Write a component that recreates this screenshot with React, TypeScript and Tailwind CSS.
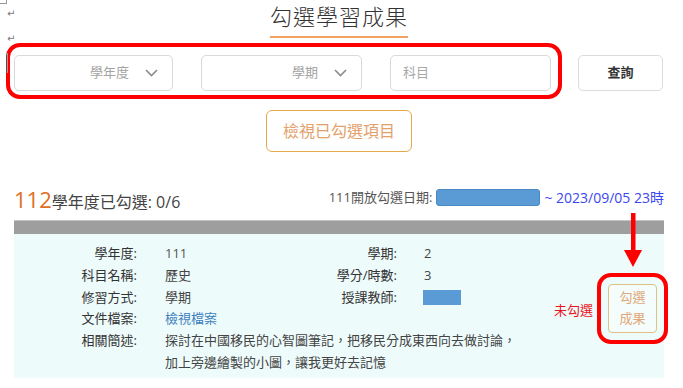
import React from "react";

const Chevron = () => (
  <svg width="13" height="8" viewBox="0 0 13 8" className="ml-[16px] shrink-0">
    <polyline points="1,1 6.5,6.5 12,1" fill="none" stroke="#8a8a8a" strokeWidth="1.6" />
  </svg>
);

const Select = ({ label, width }: { label: string; width: string }) => (
  <div className={`${width} flex h-[36px] items-center justify-end rounded-[5px] border border-[#d9d9d9] pr-[14px] text-[13px] text-[#a3a3a3]`}>
    <span>{label}</span>
    <Chevron />
  </div>
);

const Row = ({ label, children }: { label: string; children: React.ReactNode }) => (
  <div className="flex">
    <div className="w-[123px] shrink-0 text-right text-[#333]">{label}</div>
    <div className="ml-[28px] text-[#444]">{children}</div>
  </div>
);

const App = () => {
  return (
    <div className="relative min-h-[388px] w-[678px] bg-white font-['Open_Sans','Noto_Sans_CJK_TC',sans-serif] text-[#333]">
      {/* word margin marks */}
      <div className="absolute left-0 top-0 h-[4px] w-[7px] border-b border-r border-[#999]" />
      <span className="absolute left-[7px] top-[8px] font-['DejaVu_Sans',sans-serif] text-[10px] leading-[12px] text-[#777]">↵</span>
      <span className="absolute left-[7px] top-[33px] font-['DejaVu_Sans',sans-serif] text-[10px] leading-[12px] text-[#777]">↵</span>
      <div className="absolute left-[7px] top-[53px] h-[20px] w-[1px] bg-[#3cc]" />

      <div className="flex justify-center pt-[2px]">
        <h1 className="border-b-2 border-[#f2a262] pb-[6px] text-[22px] font-light leading-[28px] tracking-[1px] text-[#333]">
          勾選學習成果
        </h1>
      </div>

      <div className="mt-[5px] flex items-start">
        <div className="ml-[6px] flex gap-[28px] rounded-[14px] border-4 border-[#ff0000] pb-[4px] pl-[4px] pr-[7px] pt-[8px]">
          <Select label="學年度" width="w-[159px]" />
          <Select label="學期" width="w-[161px]" />
          <div className="flex h-[36px] w-[161px] items-center rounded-[5px] border border-[#d9d9d9] pl-[12px] text-[13px] text-[#a8a8a8]">
            科目
          </div>
        </div>
        <button className="ml-[16px] mt-[12px] h-[36px] w-[85px] rounded-[5px] border border-[#dcdcdc] text-[13px] font-bold text-[#333]">
          查詢
        </button>
      </div>

      <div className="mt-[11px] flex justify-center">
        <button className="h-[42px] w-[146px] rounded-[6px] border border-[#e6a94a] text-[16px] text-[#e3a16c]">
          檢視已勾選項目
        </button>
      </div>

      <div className="mx-[14px] mt-[34px]">
        <div className="flex h-[30px] items-end justify-between pb-[2px]">
          <div className="flex items-baseline">
            <span className="text-[22px] leading-[26px] text-[#e0701e]">112</span>
            <span className="text-[16px] text-[#444]">學年度已勾選: 0/6</span>
          </div>
          <div className="mb-[6px] flex items-center text-[13px]">
            <span className="text-[#555]">111開放勾選日期:</span>
            <span className="ml-[4px] inline-block h-[17px] w-[104px] rounded-[3px] border border-[#4a87c4] bg-[#5b9bd5]" />
            <span className="ml-[4px] text-[14px] text-[#3b48ee]">~ 2023/09/05 23時</span>
          </div>
        </div>

        <div className="mt-[4px] h-[14px] border-t border-[#c4c4c4] bg-[#9e9e9e]" />

        <div className="flex items-center justify-between bg-[#eefbfb] pb-[4px] pt-[9px] text-[13px] leading-[21.8px]">
          <div className="flex flex-col">
            <div className="flex">
              <div className="w-[123px] shrink-0 text-right">學年度:</div>
              <div className="ml-[28px] w-[132px] text-[#555]">111</div>
              <div className="w-[100px] text-right">學期:</div>
              <div className="ml-[27px] text-[#444]">2</div>
            </div>
            <div className="flex">
              <div className="w-[123px] shrink-0 text-right">科目名稱:</div>
              <div className="ml-[28px] w-[132px] text-[#444]">歷史</div>
              <div className="w-[100px] text-right">學分/時數:</div>
              <div className="ml-[27px] text-[#444]">3</div>
            </div>
            <div className="flex">
              <div className="w-[123px] shrink-0 text-right">修習方式:</div>
              <div className="ml-[28px] w-[132px] text-[#444]">學期</div>
              <div className="w-[100px] text-right">授課教師:</div>
              <div className="ml-[26px] flex items-center">
                <span className="inline-block h-[15px] w-[38px] bg-[#5b9bd5]" />
              </div>
            </div>
            <Row label="文件檔案:">
              <span className="text-[#3f7fbf]">檢視檔案</span>
            </Row>
            <Row label="相關簡述:">
              探討在中國移民的心智圖筆記，把移民分成東西向去做討論，
              <br />
              加上旁邊繪製的小圖，讓我更好去記憶
            </Row>
          </div>

          <div className="mr-[7px] flex items-center">
            <span className="mr-[15px] mt-[5px] text-[13px] text-[#e8141e]">未勾選</span>
            <div className="relative">
              <button className="flex h-[49px] w-[49px] flex-col items-center justify-center rounded-[4px] border border-[#dfc085] bg-white/40 text-[13px] leading-[21px] text-[#dfa878]">
                <span>勾選</span>
                <span>成果</span>
              </button>
              {/* red annotation */}
              <div className="pointer-events-none absolute -inset-[11px] rounded-[14px] border-4 border-[#ff0000]" />
              <svg width="20" height="55" viewBox="0 0 20 55" className="pointer-events-none absolute left-1/2 top-[-71px] -translate-x-1/2">
                <rect x="8" y="0" width="4.5" height="40" fill="#ff0000" />
                <polygon points="1,37 19,37 10,54" fill="#ff0000" />
              </svg>
            </div>
          </div>
        </div>
      </div>
    </div>
  );
};

export default App;
